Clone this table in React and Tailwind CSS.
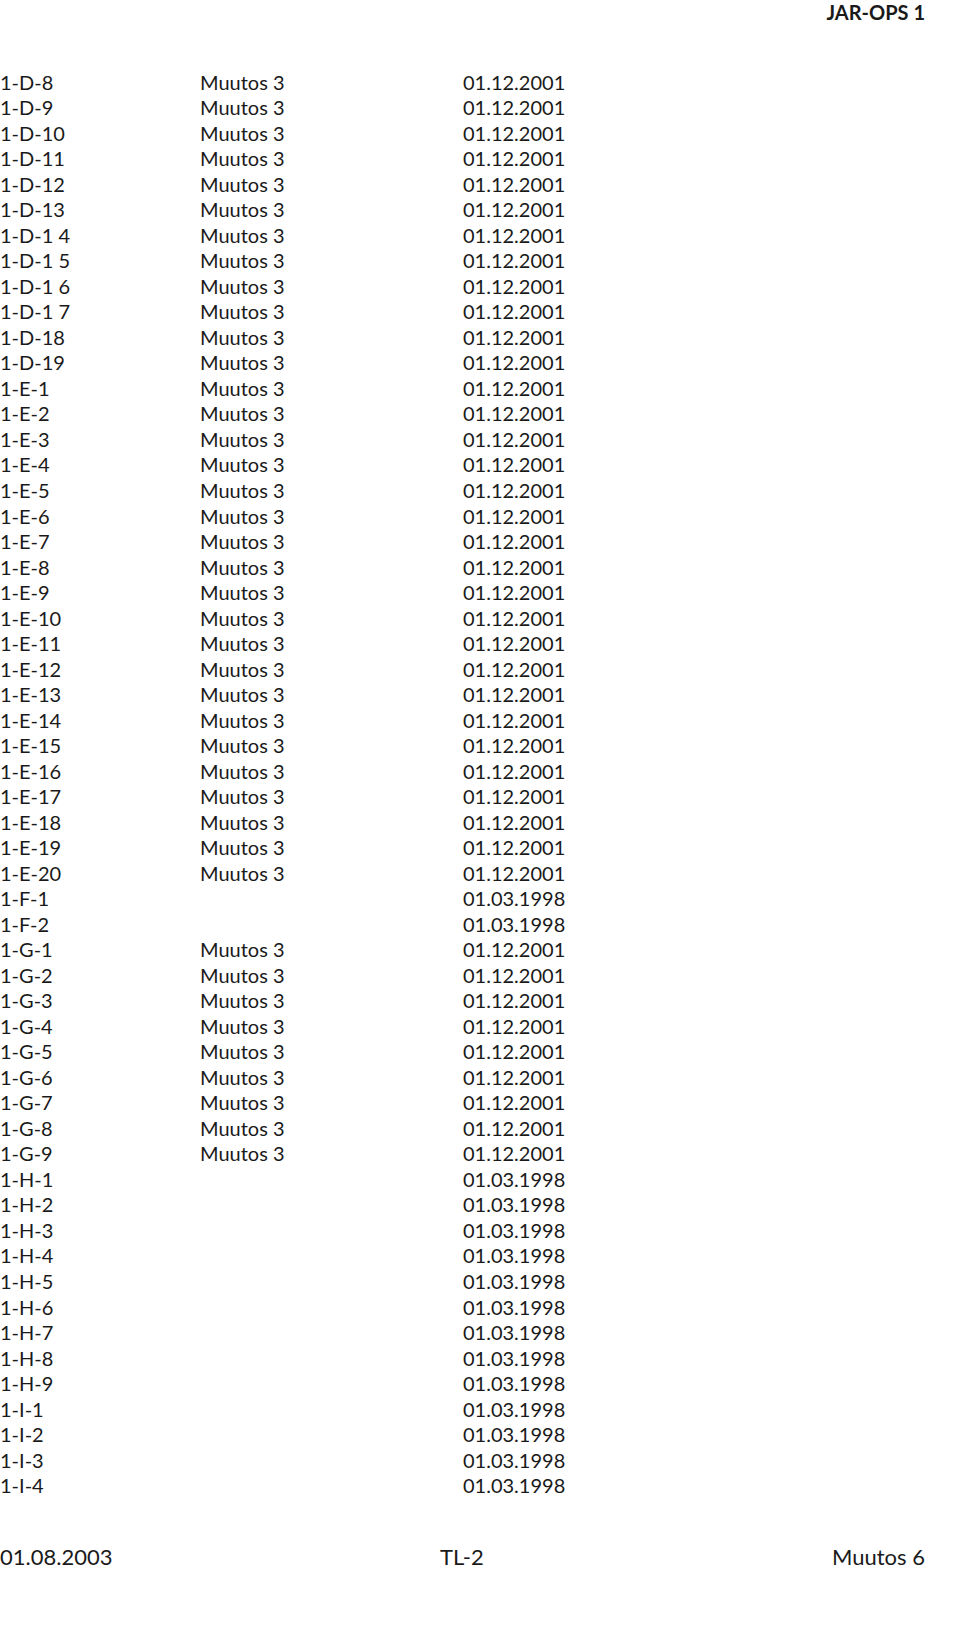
const rows = [
  ['1-D-8', 'Muutos 3', '01.12.2001'],
  ['1-D-9', 'Muutos 3', '01.12.2001'],
  ['1-D-10', 'Muutos 3', '01.12.2001'],
  ['1-D-11', 'Muutos 3', '01.12.2001'],
  ['1-D-12', 'Muutos 3', '01.12.2001'],
  ['1-D-13', 'Muutos 3', '01.12.2001'],
  ['1-D-1 4', 'Muutos 3', '01.12.2001'],
  ['1-D-1 5', 'Muutos 3', '01.12.2001'],
  ['1-D-1 6', 'Muutos 3', '01.12.2001'],
  ['1-D-1 7', 'Muutos 3', '01.12.2001'],
  ['1-D-18', 'Muutos 3', '01.12.2001'],
  ['1-D-19', 'Muutos 3', '01.12.2001'],
  ...Array.from({ length: 20 }, (_, i) => [`1-E-${i + 1}`, 'Muutos 3', '01.12.2001']),
  ['1-F-1', '', '01.03.1998'],
  ['1-F-2', '', '01.03.1998'],
  ...Array.from({ length: 9 }, (_, i) => [`1-G-${i + 1}`, 'Muutos 3', '01.12.2001']),
  ...Array.from({ length: 9 }, (_, i) => [`1-H-${i + 1}`, '', '01.03.1998']),
  ...Array.from({ length: 4 }, (_, i) => [`1-I-${i + 1}`, '', '01.03.1998']),
];

export default function App() {
  return (
    <div className="w-[960px] min-h-[1627px] bg-white text-[#1a1a1a] font-['Lato',sans-serif]">
      <div className="w-[925px] h-[24px] flex justify-end items-center text-[20px] font-bold leading-none">
        JAR-OPS 1
      </div>

      <div className="pt-[45px]">
        {rows.map(([page, change, date]) => (
          <div key={page} className="flex h-[25.53px] items-center text-[20px] leading-none">
            <span className="w-[200px]">{page}</span>
            <span className="w-[263px]">{change}</span>
            <span>{date}</span>
          </div>
        ))}
      </div>

      <div className="w-[925px] mt-[46px] flex items-center h-[26px] text-[22px] leading-none">
        <span className="w-[440px]">01.08.2003</span>
        <span className="flex-1">TL-2</span>
        <span>Muutos 6</span>
      </div>
    </div>
  );
}
